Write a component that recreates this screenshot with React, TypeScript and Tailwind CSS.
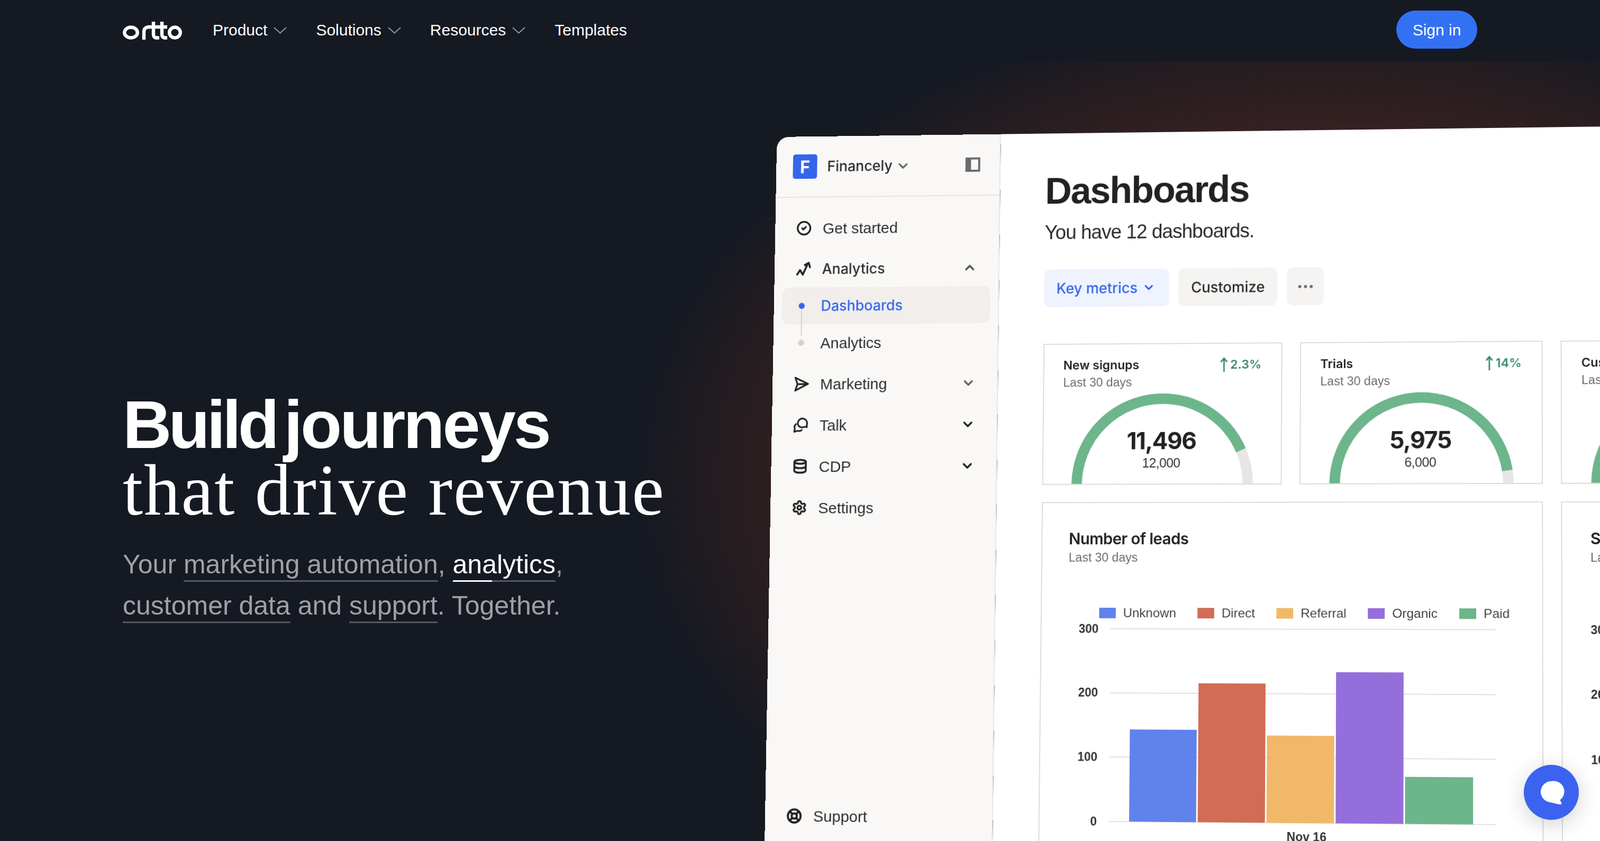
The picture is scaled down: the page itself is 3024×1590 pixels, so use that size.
import { ReactNode } from 'react'
import { CircleCheck, Database, Settings, LifeBuoy, ChevronDown, ChevronUp } from 'lucide-react'

const NavChevron = () => (
  <svg width="25" height="13" viewBox="0 0 25 13" fill="none" className="ml-[12px] mt-[2px]">
    <path d="M1 1l11.500 10.500L24 1" stroke="#97989d" strokeWidth="2" />
  </svg>
)

const Logo = () => (
  <svg width="112" height="34" viewBox="0 0 112 34" fill="none" stroke="#fff" strokeWidth="6.4">
    <ellipse cx="15.500" cy="20.500" rx="12.300" ry="10" />
    <path d="M40 34V19c0-6 4-9 10-9" />
    <path d="M48 10h36" />
    <path d="M58 0v24c0 4 2 6.500 6 6.500h5" />
    <path d="M74 0v24c0 4 2 6.500 6 6.500h4" />
    <ellipse cx="98.500" cy="20.500" rx="10.300" ry="10" />
  </svg>
)

const AnalyticsIcon = () => (
  <svg width="30" height="30" viewBox="0 0 30 30" fill="none" stroke="#222" strokeWidth="3.800" strokeLinejoin="round">
    <path d="M2 27l6.500-10L14 26l9-20" />
    <path d="M16.500 8L25.500 3l3 10" />
  </svg>
)

const SendIcon = () => (
  <svg width="31" height="31" viewBox="0 0 31 31" fill="none" stroke="#222" strokeWidth="3.400" strokeLinejoin="round">
    <path d="M3 2.500L29 15 3 28.500 7.500 15.500zM7.500 15.500H29" />
  </svg>
)

const TalkIcon = () => (
  <svg width="32" height="32" viewBox="0 0 32 32" fill="none" stroke="#222" strokeWidth="3.400" strokeLinejoin="round">
    <path d="M19.500 2.500a9.800 9.800 0 0 0-8.500 14.500c3 4 9 5 13 2.500l5 1-.5-4.500a9.800 9.800 0 0 0-9-13.500z" />
    <path d="M7 13c-3.500 2.500-5 6.500-3.500 10.500L2.500 30l6.500-2c4 1 8-.5 10.500-2.500" />
  </svg>
)

const PanelIcon = () => (
  <div className="ml-auto flex h-[28px] w-[29px] justify-end bg-[#6b6b6b] p-[4px]">
    <div className="h-full w-[14px] bg-[#f9f8f6]" />
  </div>
)

const MainRow = ({ icon, label, chevron, medium, className }: { icon: ReactNode; label: string; chevron?: ReactNode; medium?: boolean; className?: string }) => (
  <div className={`flex items-center pl-[26px] pr-[27px] text-[#2e2e2e] ${className ?? 'h-[80px]'}`}>
    <div className="flex w-[30px] shrink-0 justify-center">{icon}</div>
    <span className={`ml-[22px] ${medium ? "font-['Inter',sans-serif] text-[28px] font-medium" : 'text-[30px]'}`}>{label}</span>
    {chevron && <div className="ml-auto">{chevron}</div>}
  </div>
)

const Sidebar = () => (
  <aside className="flex w-[443px] shrink-0 flex-col border-r-2 border-[#e8e6e3] bg-[#f9f8f6]">
    <div className="flex h-[120px] shrink-0 items-center border-b-2 border-[#e6e4e1] pl-[33px] pr-[38px]">
      <div className="flex h-[48px] w-[48px] items-center justify-center rounded-[5px] bg-[#3565ec] font-['Inter',sans-serif] text-[34px] font-bold text-white">F</div>
      <span className="ml-[20px] font-['Inter',sans-serif] text-[28px] font-medium text-[#2b2b2b]">Financely</span>
      <ChevronDown size={28} strokeWidth={3} className="ml-[7px] mt-[2px] text-[#666]" />
      <PanelIcon />
    </div>
    <nav className="flex flex-1 flex-col pl-[16px] pr-[15px] pt-[20px]">
      <MainRow icon={<CircleCheck size={30} strokeWidth={2.8} color="#222" />} label="Get started" />
      <MainRow
        icon={<AnalyticsIcon />}
        label="Analytics"
        medium
        className="mt-[3px] h-[74px]"
        chevron={<ChevronUp size={28} strokeWidth={3.2} className="text-[#555]" />}
      />
      <div className="relative -mt-[1px]">
        <div className="absolute left-[38px] top-[44px] h-[50px] w-[2px] bg-[#d3d2d0]" />
        <div className="flex h-[72px] items-center rounded-[14px] bg-[#f1eeeb] pl-[33px]">
          <div className="h-[12px] w-[12px] rounded-full bg-[#3565ec]" />
          <span className="ml-[32px] font-['Inter',sans-serif] text-[28px] font-medium text-[#3565ec]">Dashboards</span>
        </div>
        <div className="flex h-[72px] items-center pl-[33px]">
          <div className="h-[12px] w-[12px] rounded-full bg-[#d3d2d0]" />
          <span className="ml-[32px] text-[30px] text-[#2e2e2e]">Analytics</span>
        </div>
      </div>
      <MainRow
        icon={<SendIcon />}
        label="Marketing"
        className="mt-[4px] h-[80px]"
        chevron={<ChevronDown size={28} strokeWidth={3.2} className="text-[#666]" />}
      />
      <MainRow icon={<TalkIcon />} label="Talk" chevron={<ChevronDown size={28} strokeWidth={3.2} className="text-[#222]" />} />
      <MainRow icon={<Database size={30} strokeWidth={3} color="#222" />} label="CDP" chevron={<ChevronDown size={28} strokeWidth={3.2} className="text-[#222]" />} />
      <MainRow icon={<Settings size={32} strokeWidth={2.8} color="#222" />} label="Settings" />
      <MainRow icon={<LifeBuoy size={31} strokeWidth={3.2} color="#222" />} label="Support" className="mb-[65px] mt-auto h-[80px]" />
    </nav>
  </aside>
)

const Gauge = ({ value }: { value: number }) => (
  <svg width="462" height="176" viewBox="0 0 462 176" fill="none" className="absolute bottom-0 left-0">
    <path d="M65 178A165 165 0 0 1 395 178" stroke="#e8e6e3" strokeWidth="20" />
    <path d="M65 178A165 165 0 0 1 395 178" stroke="#6db58b" strokeWidth="20" pathLength={100} strokeDasharray={`${value} 100`} />
  </svg>
)

const MetricCard = ({ title, delta, value, target, fill }: { title: string; delta?: string; value?: string; target?: string; fill: number }) => (
  <div className="relative h-[272px] overflow-hidden border-2 border-[#dcdcda] bg-white pl-[37px] pr-[38px] pt-[25px]">
    <div className="flex items-center justify-between">
      <span className="font-['Inter',sans-serif] text-[23.500px] font-semibold leading-[30px] text-[#222]">{title}</span>
      {delta && (
        <span className="flex items-center gap-[5px] font-['Inter',sans-serif] text-[23.500px] font-semibold leading-[30px] text-[#3a8a6a]">
          <svg width="14" height="28" viewBox="0 0 14 28" fill="none" stroke="#3a8a6a" strokeWidth="2.800">
            <path d="M7 28V2M1 9l6-7 6 7" />
          </svg>
          {delta}
        </span>
      )}
    </div>
    <div className="mt-[4px] text-[23.500px] leading-[28px] text-[#6c6c6c]">Last 30 days</div>
    <Gauge value={fill} />
    {value && (
      <div className="absolute inset-x-0 top-[160px] flex flex-col items-center pr-[2px]">
        <span className="font-['Inter',sans-serif] text-[45px] font-bold leading-[52px] tracking-[-1.500px] text-[#222]">{value}</span>
        <span className="mt-[1px] text-[25px] leading-[30px] tracking-[-0.500px] text-[#333]">{target}</span>
      </div>
    )}
  </div>
)

const legend = [
  { label: 'Unknown', color: 'bg-[#5f82ec]' },
  { label: 'Direct', color: 'bg-[#d26c55]' },
  { label: 'Referral', color: 'bg-[#f1b86a]' },
  { label: 'Organic', color: 'bg-[#946fdb]' },
  { label: 'Paid', color: 'bg-[#6db58b]' },
]

const bars = [
  { h: 'h-[174px]', color: 'bg-[#5f82ec]' },
  { h: 'h-[262px]', color: 'bg-[#d26c55]' },
  { h: 'h-[164px]', color: 'bg-[#f1b86a]' },
  { h: 'h-[284px]', color: 'bg-[#946fdb]' },
  { h: 'h-[88px]', color: 'bg-[#6db58b]' },
]

const axis = ['300', '200', '100', '0']

const CardHead = ({ title }: { title: string }) => (
  <>
    <div className="font-['Inter',sans-serif] text-[30px] font-semibold leading-[36px] tracking-[-0.600px] text-[#222]">{title}</div>
    <div className="mt-[4px] text-[23.500px] leading-[28px] text-[#6c6c6c]">Last 30 days</div>
  </>
)

const LeadsCard = () => (
  <div className="col-span-2 h-[720px] border-2 border-[#dcdcda] bg-white pl-[51px] pt-[50px]">
    <CardHead title="Number of leads" />
    <div className="ml-[60px] mt-[78px] flex h-[28px] items-center gap-[41px] text-[24.500px] text-[#444]">
      {legend.map((item) => (
        <div key={item.label} className="flex items-center gap-[14px]">
          <div className={`h-[20px] w-[32px] ${item.color}`} />
          <span>{item.label}</span>
        </div>
      ))}
    </div>
    <div className="relative mt-[16px] flex h-[365px] flex-col justify-between">
      {axis.map((label) => (
        <div key={label} className="flex h-0 items-center">
          <span className="w-[59px] text-right text-[23px] font-bold text-[#333]">{label}</span>
          <div className="ml-[23px] h-[2px] w-[734px] bg-[#e2e2e0]" />
        </div>
      ))}
      <div className="absolute bottom-0 left-[121px] flex items-end gap-[3px]">
        {bars.map((bar) => (
          <div key={bar.color} className={`w-[128px] ${bar.h} ${bar.color}`} />
        ))}
      </div>
    </div>
    <div className="ml-[82px] mt-[12px] w-[754px] text-center text-[23px] font-bold leading-[28px] text-[#333]">Nov 16</div>
  </div>
)

const SourceCard = () => (
  <div className="h-[720px] border-2 border-[#dcdcda] bg-white pl-[53px] pt-[50px]">
    <CardHead title="Sales by channel" />
    <div className="mt-[122px] flex h-[365px] flex-col justify-between">
      {axis.map((label) => (
        <div key={label} className="flex h-0 items-center">
          <span className="w-[38px] text-right text-[23px] font-bold text-[#333]">{label}</span>
        </div>
      ))}
    </div>
  </div>
)

const Dashboard = () => (
  <main className="flex-1 bg-white pl-[88px] pt-[72px]">
    <h2 className="text-[72px] font-bold leading-[80px] tracking-[-2px] text-[#222]">Dashboards</h2>
    <p className="mt-[17px] text-[38px] leading-[48px] tracking-[-1px] text-[#2b2b2b]">You have 12 dashboards.</p>
    <div className="mt-[48px] flex gap-[18px] font-['Inter',sans-serif] text-[28px] font-medium">
      <div className="flex h-[73px] w-[243px] items-center rounded-[12px] bg-[#eef3fe] pl-[24px] text-[#3565ec]">
        Key metrics
        <ChevronDown size={25} strokeWidth={3.200} className="ml-[9px]" />
      </div>
      <div className="flex h-[73px] w-[191px] items-center justify-center rounded-[12px] bg-[#f5f4f2] text-[#2b2b2b]">Customize</div>
      <div className="flex h-[73px] w-[71px] items-center justify-center gap-[5px] rounded-[12px] bg-[#f5f4f2]">
        <div className="h-[6px] w-[6px] rounded-full bg-[#6b6b6b]" />
        <div className="h-[6px] w-[6px] rounded-full bg-[#6b6b6b]" />
        <div className="h-[6px] w-[6px] rounded-full bg-[#6b6b6b]" />
      </div>
    </div>
    <div className="mt-[71px] grid grid-cols-[462px_462px_462px] gap-x-[34px] gap-y-[33px]">
      <MetricCard title="New signups" delta="2.3%" value="11,496" target="12,000" fill={87} />
      <MetricCard title="Trials" delta="14%" value="5,975" target="6,000" fill={95} />
      <MetricCard title="Customers" fill={90} />
      <LeadsCard />
      <SourceCard />
    </div>
  </main>
)

const SubLink = ({ children }: { children: ReactNode }) => (
  <span className="relative border-b-[3px] border-[#55585e] pb-[2px]">{children}</span>
)

export default function App() {
  return (
    <div className="relative flex h-[1590px] w-[3024px] flex-col overflow-hidden bg-[#151922] font-['Liberation_Sans',sans-serif]">
      <header className="flex h-[116px] shrink-0 items-center pl-[232px] pr-[232px] text-[30px] text-white">
        <Logo />
        <nav className="mb-[3px] ml-[58px] flex items-center gap-[55px]">
          <div className="flex items-center">Product<NavChevron /></div>
          <div className="flex items-center">Solutions<NavChevron /></div>
          <div className="flex items-center">Resources<NavChevron /></div>
          <div>Templates</div>
        </nav>
        <div className="ml-auto mb-[4px] flex h-[72px] w-[153px] items-center justify-center rounded-full bg-[#3271f4]">Sign in</div>
      </header>

      <section className="relative flex-1 bg-[radial-gradient(ellipse_1300px_900px_at_2500px_784px,#4a2a26_0%,#382222_70%,#2b1e20_82%,#151922_100%)] pl-[232px] pt-[624px]">
        <h1 className="text-white">
          <span className="block text-[128px] font-bold leading-[125px] [word-spacing:-15px]">
            <span className="tracking-[-6px]">Build </span>
            <span className="tracking-[-4px]">journeys</span>
          </span>
          <span className="block font-['Liberation_Serif',serif] text-[137px] font-normal leading-[125px] tracking-[2px]">that drive revenue</span>
        </h1>
        <p className="mt-[38px] text-[50px] leading-[78px] text-[#a0a0a5]">
          Your <SubLink>marketing automation</SubLink>,{' '}
          <span className="relative border-b-[3px] border-[#55585e] pb-[2px] text-white">
            analytics
            <span className="absolute bottom-[-3px] left-0 h-[3px] w-[74px] bg-white" />
          </span>
          ,<br />
          <SubLink>customer data</SubLink> and <SubLink>support</SubLink>. Together.
        </p>
      </section>

      <div className="absolute left-[1427px] top-[234px] flex h-[1420px] w-[1800px] origin-[1338px_807px] overflow-hidden rounded-tl-[24px] [transform:matrix3d(1,0,0,-0.00001583,0,1,0,-0.0000133,0,0,1,0,0,0,0,1)]">
        <Sidebar />
        <Dashboard />
      </div>

      <div className="absolute bottom-[40px] right-[40px] flex h-[104px] w-[104px] items-center justify-center rounded-full bg-[#3b63f0] shadow-[0_8px_40px_rgba(0,0,0,0.18)]">
        <svg width="104" height="104" viewBox="0 0 104 104" fill="#fff">
          <path d="M52 31a20 20 0 0 0-4 39.600l20 4.400c3 .5 4-1.500 3-3.500l-2.500-5A20 20 0 0 0 52 31z" />
        </svg>
      </div>
    </div>
  )
}
